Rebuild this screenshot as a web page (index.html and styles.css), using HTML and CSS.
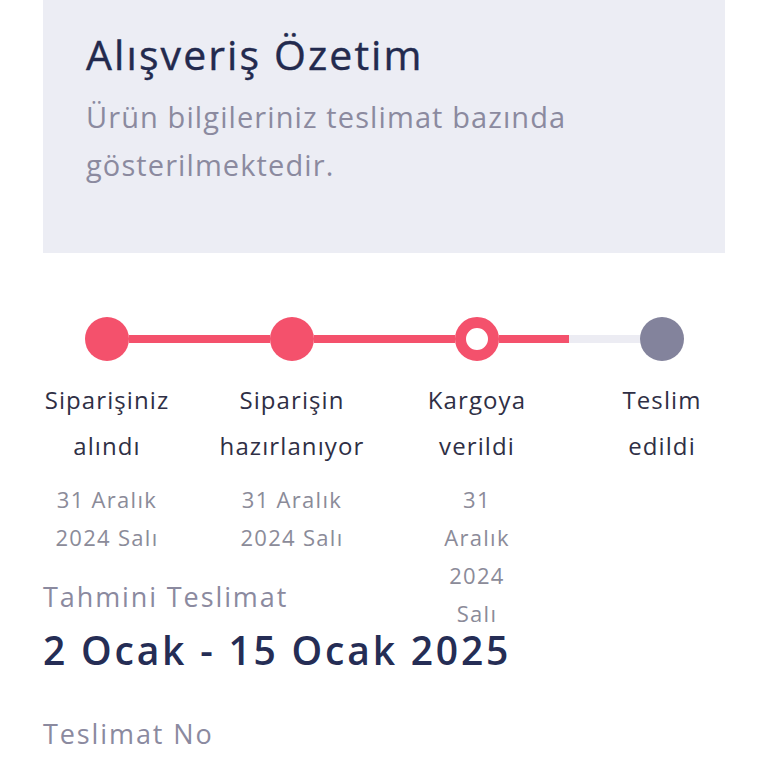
FILE: index.html
```html
<!DOCTYPE html>
<html lang="tr">
<head>
    <meta charset="UTF-8">
    <meta name="viewport" content="width=device-width, initial-scale=1.0">
    <title>Alışveriş Özetim</title>
    <link rel="stylesheet" href="styles.css">
</head>
<body>

    <div class="page">

        <!-- Summary header -->
        <div class="summary">
            <h1>Alışveriş Özetim</h1>
            <p>Ürün bilgileriniz teslimat bazında gösterilmektedir.</p>
        </div>

        <!-- Order tracking -->
        <div class="tracker">
            <div class="track">
                <span class="dot done"></span>
                <span class="bar done"></span>
                <span class="dot done"></span>
                <span class="bar done"></span>
                <span class="dot current"></span>
                <span class="bar half"></span>
                <span class="dot todo"></span>
            </div>

            <div class="steps">
                <div class="step">
                    <div class="step-label">Siparişiniz alındı</div>
                    <div class="step-date">31 Aralık 2024 Salı</div>
                </div>
                <div class="step">
                    <div class="step-label">Siparişin hazırlanıyor</div>
                    <div class="step-date">31 Aralık 2024 Salı</div>
                </div>
                <div class="step">
                    <div class="step-label">Kargoya verildi</div>
                    <div class="step-date narrow">31 Aralık 2024 Salı</div>
                </div>
                <div class="step">
                    <div class="step-label">Teslim edildi</div>
                </div>
            </div>
        </div>

        <!-- Delivery info -->
        <div class="delivery">
            <div class="delivery-title">Tahmini Teslimat</div>
            <div class="delivery-range">2 Ocak - 15 Ocak 2025</div>
            <div class="delivery-title no">Teslimat No</div>
        </div>

    </div>

</body>
</html>
```

FILE: styles.css
```css
* {
    margin: 0;
    padding: 0;
    box-sizing: border-box;
}

body {
    background-color: #fff;
    font-family: "Open Sans", "Noto Sans", sans-serif;
    color: #2f2f45;
}

.page {
    padding: 0 43px;
}

/* Header box */
.summary {
    background-color: #ecedf4;
    height: 253px;
    padding: 26px 43px 0;
}

.summary h1 {
    font-size: 41px;
    font-weight: 400;
    line-height: 56px;
    letter-spacing: 2.1px;
    color: #232a4e;
    -webkit-text-stroke: 0.4px #232a4e;
}

.summary p {
    font-size: 29px;
    line-height: 48px;
    letter-spacing: 1.1px;
    color: #8b8a9f;
    margin-top: 11px;
}

/* Tracker */
.tracker {
    margin-top: 64px;
}

.track {
    display: flex;
    align-items: center;
    padding-left: 42px;
}

.dot {
    flex: none;
    width: 44px;
    height: 44px;
    border-radius: 50%;
}

.dot.done {
    background-color: #f4516c;
}

.dot.current {
    background-color: #fff;
    border: 11px solid #f4516c;
}

.dot.todo {
    background-color: #83839c;
}

.bar {
    flex: none;
    width: 141px;
    height: 8px;
}

.bar.done {
    background-color: #f4516c;
}

.bar.half {
    background: linear-gradient(to right, #f4516c 0, #f4516c 70px, #ececf3 70px);
}

.steps {
    display: grid;
    grid-template-columns: repeat(4, 128px);
    column-gap: 57px;
    height: 202px;
    margin-top: 16px;
}

.step {
    display: flex;
    flex-direction: column;
    align-items: center;
    text-align: center;
}

.step-label {
    font-size: 24px;
    line-height: 46px;
    letter-spacing: 1.1px;
    width: min-content;
    color: #2f2f45;
}

.step-date {
    font-size: 22px;
    line-height: 38px;
    letter-spacing: 1.3px;
    color: #8b8b99;
    margin-top: 11px;
    width: 130px;
}

.step-date.narrow {
    width: 80px;
}

/* Delivery */
.delivery-title {
    font-size: 27px;
    line-height: 36px;
    letter-spacing: 1.9px;
    color: #8b8a9f;
}

.delivery-range {
    font-size: 39px;
    font-weight: 600;
    line-height: 52px;
    letter-spacing: 2.8px;
    color: #252d55;
    margin-top: 9px;
}

.delivery-title.no {
    margin-top: 40px;
}
```
